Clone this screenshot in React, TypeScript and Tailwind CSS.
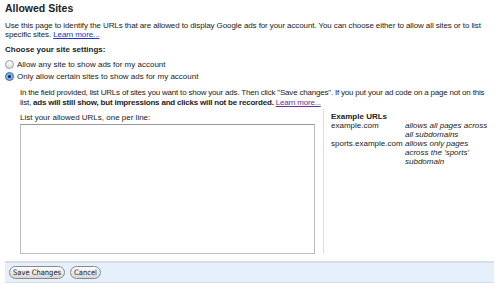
export default function App() {
  return (
    <div className="w-[500px] h-[293px] bg-white text-[#222] overflow-hidden" style={{ fontFamily: '"Liberation Sans", Arial, sans-serif' }}>
      <div className="px-[5px] pt-[1px]">
        <div className="text-[10.5px] font-bold leading-[14px]">Allowed Sites</div>
        <p className="mt-[6px] text-[8px] leading-[9px] tracking-[-0.1px]">
          Use this page to identify the URLs that are allowed to display Google ads for your account. You can choose either to allow all sites or to list specific sites.{" "}
          <a className="text-[#2233cc] underline">Learn more...</a>
        </p>
        <div className="mt-[6px] text-[8px] leading-[10px] font-bold">Choose your site settings:</div>
        <div className="mt-[5px] flex flex-col gap-[3px] text-[8px] leading-[9px]">
          <label className="flex items-center gap-[3px]">
            <span className="w-[9px] h-[9px] rounded-full border border-[#999] bg-gradient-to-b from-white to-[#ddd]" />
            Allow any site to show ads for my account
          </label>
          <label className="flex items-center gap-[3px]">
            <span className="w-[9px] h-[9px] rounded-full border border-[#3a6fb5] bg-[#7fb0ea] flex items-center justify-center">
              <span className="w-[3px] h-[3px] rounded-full bg-[#123]" />
            </span>
            Only allow certain sites to show ads for my account
          </label>
        </div>
        <div className="pl-[15px] mt-[7px]">
          <p className="text-[8px] leading-[10px] tracking-[-0.2px]">
            In the field provided, list URLs of sites you want to show your ads. Then click "Save changes". If you put your ad code on a page not on this list,{" "}
            <b>ads will still show, but impressions and clicks will not be recorded.</b>{" "}
            <a className="text-[#663399] underline">Learn more...</a>
          </p>
          <div className="mt-[5px] flex">
            <div className="w-[297px]">
              <div className="text-[8px] leading-[10px]">List your allowed URLs, one per line:</div>
              <div className="mt-[1px] h-[130px] border border-[#bbb] border-t-[#999]" />
            </div>
            <div className="ml-[8px] mt-[-4px] pt-[3px] h-[145px] border-l border-[#ddd] pl-[7px] text-[8px] leading-[9px]">
              <div className="font-bold">Example URLs</div>
              <div className="flex">
                <span className="w-[74px]">example.com</span>
                <span className="italic w-[90px]">allows all pages across all subdomains</span>
              </div>
              <div className="flex">
                <span className="w-[74px]">sports.example.com</span>
                <span className="italic w-[70px]">allows only pages across the 'sports' subdomain</span>
              </div>
            </div>
          </div>
        </div>
        <div className="mt-[7px] mr-[1px] h-[22px] bg-[#e5f0fc] border-t-2 border-b border-[#d8dde3] flex items-center gap-[5px] px-[4px]">
          <button className="h-[13px] px-[3px] rounded-full border border-[#888] bg-gradient-to-b from-white to-[#d6d6d6] text-[7.5px] leading-[11px] text-[#222]" style={{ fontFamily: '"DejaVu Sans Condensed", "Liberation Sans Narrow", sans-serif' }}>Save Changes</button>
          <button className="h-[13px] px-[3px] rounded-full border border-[#888] bg-gradient-to-b from-white to-[#d6d6d6] text-[7.5px] leading-[11px] text-[#222]" style={{ fontFamily: '"DejaVu Sans Condensed", "Liberation Sans Narrow", sans-serif' }}>Cancel</button>
        </div>
      </div>
    </div>
  );
}
